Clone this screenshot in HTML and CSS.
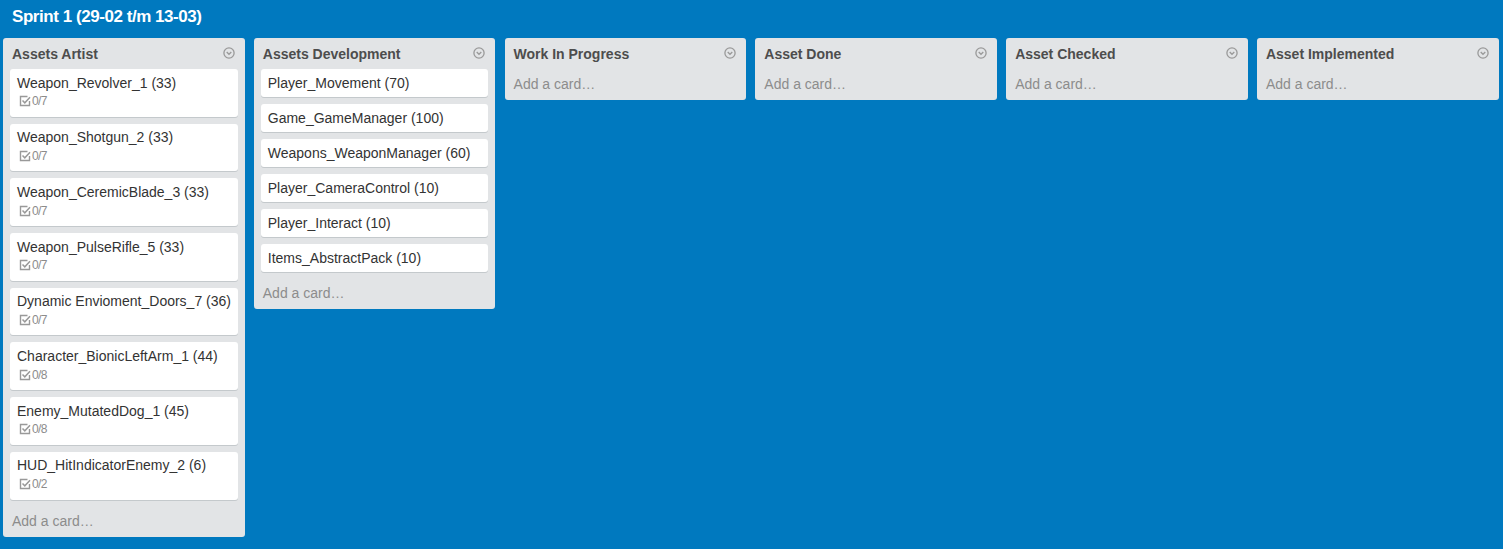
FILE: index.html
```html
<!DOCTYPE html>
<html>
<head>
<meta charset="utf-8">
<link rel="stylesheet" href="styles.css">
</head>
<body>
<div class="board">
  <h1 class="board-title">Sprint 1 (29-02 t/m 13-03)</h1>
  <div class="lists">
    <div class="list">
      <div class="list-header"><span class="list-name">Assets Artist</span><svg class="menu-icon" viewBox="0 0 12 12"><circle cx="6" cy="6" r="5.1" fill="none" stroke="#999" stroke-width="1.3"/><path d="M3.7 5 L6 7.3 L8.3 5" fill="none" stroke="#999" stroke-width="1.3"/></svg></div>
      <div class="cards">
        <div class="card"><div class="card-title">Weapon_Revolver_1 (33)</div><div class="badge"><svg class="check" viewBox="0 0 12 12"><path d="M8.5 1.5 H1.5 V10.5 H10.5 V6" fill="none" stroke="#999" stroke-width="1.4"/><path d="M3.5 5.5 L5.8 7.8 L11 2.3" fill="none" stroke="#999" stroke-width="1.5"/></svg>0/7</div></div>
        <div class="card"><div class="card-title">Weapon_Shotgun_2 (33)</div><div class="badge"><svg class="check" viewBox="0 0 12 12"><path d="M8.5 1.5 H1.5 V10.5 H10.5 V6" fill="none" stroke="#999" stroke-width="1.4"/><path d="M3.5 5.5 L5.8 7.8 L11 2.3" fill="none" stroke="#999" stroke-width="1.5"/></svg>0/7</div></div>
        <div class="card"><div class="card-title">Weapon_CeremicBlade_3 (33)</div><div class="badge"><svg class="check" viewBox="0 0 12 12"><path d="M8.5 1.5 H1.5 V10.5 H10.5 V6" fill="none" stroke="#999" stroke-width="1.4"/><path d="M3.5 5.5 L5.8 7.8 L11 2.3" fill="none" stroke="#999" stroke-width="1.5"/></svg>0/7</div></div>
        <div class="card"><div class="card-title">Weapon_PulseRifle_5 (33)</div><div class="badge"><svg class="check" viewBox="0 0 12 12"><path d="M8.5 1.5 H1.5 V10.5 H10.5 V6" fill="none" stroke="#999" stroke-width="1.4"/><path d="M3.5 5.5 L5.8 7.8 L11 2.3" fill="none" stroke="#999" stroke-width="1.5"/></svg>0/7</div></div>
        <div class="card"><div class="card-title">Dynamic Envioment_Doors_7 (36)</div><div class="badge"><svg class="check" viewBox="0 0 12 12"><path d="M8.5 1.5 H1.5 V10.5 H10.5 V6" fill="none" stroke="#999" stroke-width="1.4"/><path d="M3.5 5.5 L5.8 7.8 L11 2.3" fill="none" stroke="#999" stroke-width="1.5"/></svg>0/7</div></div>
        <div class="card"><div class="card-title">Character_BionicLeftArm_1 (44)</div><div class="badge"><svg class="check" viewBox="0 0 12 12"><path d="M8.5 1.5 H1.5 V10.5 H10.5 V6" fill="none" stroke="#999" stroke-width="1.4"/><path d="M3.5 5.5 L5.8 7.8 L11 2.3" fill="none" stroke="#999" stroke-width="1.5"/></svg>0/8</div></div>
        <div class="card"><div class="card-title">Enemy_MutatedDog_1 (45)</div><div class="badge"><svg class="check" viewBox="0 0 12 12"><path d="M8.5 1.5 H1.5 V10.5 H10.5 V6" fill="none" stroke="#999" stroke-width="1.4"/><path d="M3.5 5.5 L5.8 7.8 L11 2.3" fill="none" stroke="#999" stroke-width="1.5"/></svg>0/8</div></div>
        <div class="card"><div class="card-title">HUD_HitIndicatorEnemy_2 (6)</div><div class="badge"><svg class="check" viewBox="0 0 12 12"><path d="M8.5 1.5 H1.5 V10.5 H10.5 V6" fill="none" stroke="#999" stroke-width="1.4"/><path d="M3.5 5.5 L5.8 7.8 L11 2.3" fill="none" stroke="#999" stroke-width="1.5"/></svg>0/2</div></div>
      </div>
      <div class="add-card">Add a card…</div>
    </div>
    <div class="list">
      <div class="list-header"><span class="list-name">Assets Development</span><svg class="menu-icon" viewBox="0 0 12 12"><circle cx="6" cy="6" r="5.1" fill="none" stroke="#999" stroke-width="1.3"/><path d="M3.7 5 L6 7.3 L8.3 5" fill="none" stroke="#999" stroke-width="1.3"/></svg></div>
      <div class="cards">
        <div class="card"><div class="card-title">Player_Movement (70)</div></div>
        <div class="card"><div class="card-title">Game_GameManager (100)</div></div>
        <div class="card"><div class="card-title">Weapons_WeaponManager (60)</div></div>
        <div class="card"><div class="card-title">Player_CameraControl (10)</div></div>
        <div class="card"><div class="card-title">Player_Interact (10)</div></div>
        <div class="card"><div class="card-title">Items_AbstractPack (10)</div></div>
      </div>
      <div class="add-card">Add a card…</div>
    </div>
    <div class="list">
      <div class="list-header"><span class="list-name">Work In Progress</span><svg class="menu-icon" viewBox="0 0 12 12"><circle cx="6" cy="6" r="5.1" fill="none" stroke="#999" stroke-width="1.3"/><path d="M3.7 5 L6 7.3 L8.3 5" fill="none" stroke="#999" stroke-width="1.3"/></svg></div>
      <div class="add-card">Add a card…</div>
    </div>
    <div class="list">
      <div class="list-header"><span class="list-name">Asset Done</span><svg class="menu-icon" viewBox="0 0 12 12"><circle cx="6" cy="6" r="5.1" fill="none" stroke="#999" stroke-width="1.3"/><path d="M3.7 5 L6 7.3 L8.3 5" fill="none" stroke="#999" stroke-width="1.3"/></svg></div>
      <div class="add-card">Add a card…</div>
    </div>
    <div class="list">
      <div class="list-header"><span class="list-name">Asset Checked</span><svg class="menu-icon" viewBox="0 0 12 12"><circle cx="6" cy="6" r="5.1" fill="none" stroke="#999" stroke-width="1.3"/><path d="M3.7 5 L6 7.3 L8.3 5" fill="none" stroke="#999" stroke-width="1.3"/></svg></div>
      <div class="add-card">Add a card…</div>
    </div>
    <div class="list">
      <div class="list-header"><span class="list-name">Asset Implemented</span><svg class="menu-icon" viewBox="0 0 12 12"><circle cx="6" cy="6" r="5.1" fill="none" stroke="#999" stroke-width="1.3"/><path d="M3.7 5 L6 7.3 L8.3 5" fill="none" stroke="#999" stroke-width="1.3"/></svg></div>
      <div class="add-card">Add a card…</div>
    </div>
  </div>
</div>
</body>
</html>
```
FILE: styles.css
```css
html, body {
  margin: 0;
  padding: 0;
  background: #0079bf;
  height: 100%;
  overflow: hidden;
}
body {
  font-family: "Liberation Sans", Arial, sans-serif;
  font-size: 14px;
  color: #333;
}
.board {
  padding: 0 0 0 3px;
}
.board-title {
  margin: 0;
  padding: 6px 0 0 9px;
  height: 32px;
  box-sizing: border-box;
  font-size: 17px;
  line-height: 22px;
  font-weight: bold;
  letter-spacing: -0.45px;
  color: #fff;
}
.lists {
  display: flex;
  align-items: flex-start;
  gap: 9.2px;
  margin-top: 6px;
}
.list {
  width: 241.6px;
  flex: none;
  background: #e2e4e6;
  border-radius: 3px;
  padding: 0 7px;
  box-sizing: border-box;
}
.list-header {
  height: 31px;
  display: flex;
  align-items: center;
  justify-content: space-between;
  padding: 0 3px 0 2px;
  box-sizing: border-box;
}
.list-name {
  font-weight: bold;
  color: #4d4d4d;
  font-size: 14px;
  line-height: 18px;
}
.menu-icon {
  width: 12px;
  height: 12px;
  margin-top: -1px;
}
.cards {
  display: flex;
  flex-direction: column;
  gap: 7px;
}
.card {
  background: #fff;
  border-radius: 3px;
  box-shadow: 0 1px 0 #c4c9cc;
  padding: 4.5px 4px 5.5px 7px;
  min-height: 18px;
}
.card-title {
  line-height: 18px;
  color: #333;
  white-space: nowrap;
}
.badge {
  display: flex;
  align-items: center;
  font-size: 12px;
  color: #8c8c8c;
  height: 19.7px;
  padding-left: 2px;
  letter-spacing: -0.6px;
}
.check {
  width: 12px;
  height: 12px;
  margin-right: 1px;
}
.add-card {
  height: 31px;
  line-height: 30px;
  color: #8c8c8c;
  padding-left: 2px;
  font-size: 14px;
}
.cards + .add-card {
  margin-top: 6px;
  line-height: 30px;
}
```
